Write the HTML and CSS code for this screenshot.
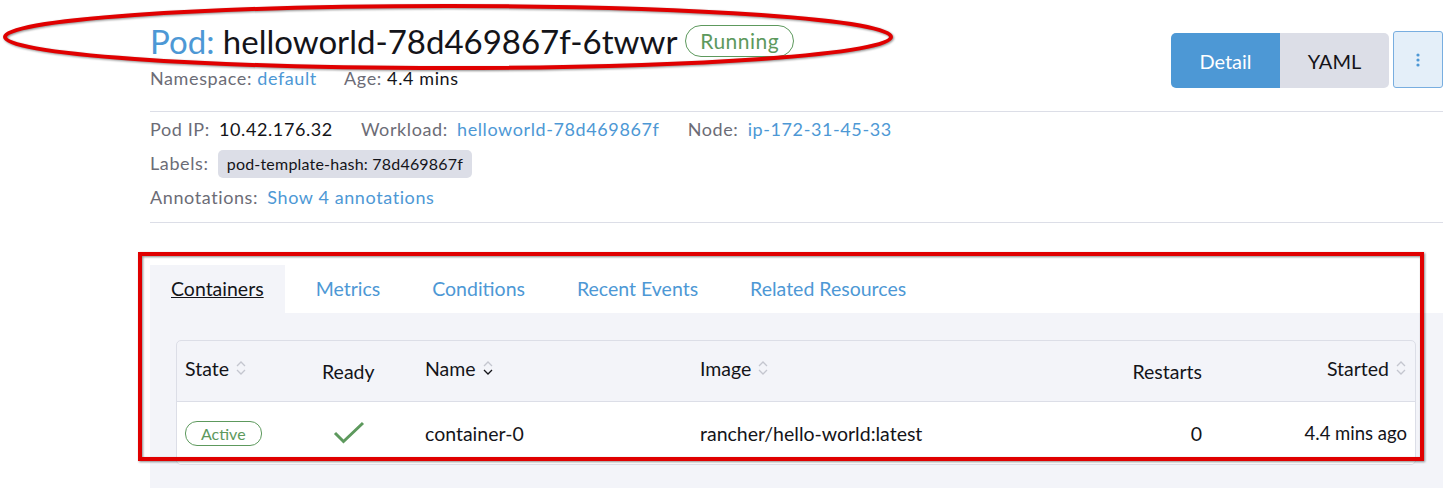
FILE: index.html
```html
<!DOCTYPE html>
<html>
<head>
  <title>Pod: helloworld-78d469867f-6twwr</title>
  <meta charset='utf-8'>
  <link rel="stylesheet" href="styles.css">
</head>
<body>

<div class="page">
  <header class="masthead">
    <div class="title-block">
      <h1><span class="kind">Pod:</span> helloworld-78d469867f-6twwr <span class="badge running">Running</span></h1>
      <div class="subline">
        <span class="lbl">Namespace:</span> <a href="#">default</a>
        <span class="lbl age">Age:</span> 4.4 mins
      </div>
    </div>
    <div class="actions">
      <div class="toggle">
        <button class="on">Detail</button><button>YAML</button>
      </div>
      <button class="kebab">
        <svg width="4" height="14" viewBox="0 0 4 14"><circle cx="2" cy="2" r="1.6"/><circle cx="2" cy="7" r="1.6"/><circle cx="2" cy="12" r="1.6"/></svg>
      </button>
    </div>
  </header>

  <section class="details">
    <div class="row">
      <span class="item"><span class="lbl">Pod IP:</span> <span class="val">10.42.176.32</span></span>
      <span class="item"><span class="lbl">Workload:</span> <a href="#">helloworld-78d469867f</a></span>
      <span class="item"><span class="lbl">Node:</span> <a href="#">ip-172-31-45-33</a></span>
    </div>
    <div class="row">
      <span class="lbl">Labels:</span> <span class="tag">pod-template-hash: 78d469867f</span>
    </div>
    <div class="row">
      <span class="lbl">Annotations:</span> <a href="#">Show 4 annotations</a>
    </div>
  </section>

  <section class="tabbed">
    <ul class="tabs">
      <li class="active"><a href="#">Containers</a></li>
      <li><a href="#">Metrics</a></li>
      <li><a href="#">Conditions</a></li>
      <li><a href="#">Recent Events</a></li>
      <li><a href="#">Related Resources</a></li>
    </ul>
    <div class="tab-body">
      <table class="sortable">
        <colgroup>
          <col style="width:137px"><col style="width:103px"><col style="width:275px"><col style="width:358px"><col style="width:160px"><col>
        </colgroup>
        <thead>
          <tr>
            <th><span class="th">State <svg class="sort" width="12" height="20" viewBox="0 0 12 20"><path d="M2 8 L6 4 L10 8"/><path d="M2 12 L6 16 L10 12"/></svg></span></th>
            <th>Ready</th>
            <th><span class="th">Name <svg class="sort" width="12" height="20" viewBox="0 0 12 20"><path d="M2 8 L6 4 L10 8"/><path class="cur" d="M2 12 L6 16 L10 12"/></svg></span></th>
            <th><span class="th">Image <svg class="sort" width="12" height="20" viewBox="0 0 12 20"><path d="M2 8 L6 4 L10 8"/><path d="M2 12 L6 16 L10 12"/></svg></span></th>
            <th class="right">Restarts</th>
            <th class="right"><span class="th">Started <svg class="sort" width="12" height="20" viewBox="0 0 12 20"><path d="M2 8 L6 4 L10 8"/><path d="M2 12 L6 16 L10 12"/></svg></span></th>
          </tr>
        </thead>
        <tbody>
          <tr>
            <td><span class="badge small running">Active</span></td>
            <td class="ready"><svg width="32" height="24" viewBox="0 0 32 24"><path d="M2 12 L10.5 20.5 L30 2"/></svg></td>
            <td>container-0</td>
            <td>rancher/hello-world:latest</td>
            <td class="right">0</td>
            <td class="right started">4.4 mins ago</td>
          </tr>
        </tbody>
      </table>
    </div>
  </section>
</div>

<!-- red markup drawn over the screenshot -->
<svg class="marks" width="1447" height="488" viewBox="0 0 1447 488">
  <ellipse cx="448" cy="37" rx="443" ry="31"/>
  <rect x="140" y="254" width="1282" height="205"/>
</svg>

</body>
</html>
```

FILE: styles.css
```css
body {
  margin:0;
  padding:0;
  font-family:'Lato', 'Noto Sans', sans-serif;
  color:#141419;
  background:#fff;
}

a {
  color:#4d98d5;
  text-decoration:none;
}

.page {
  padding:21px 4px 0 150px;
}

.lbl {
  color:#6c6c76;
}

/* header */
.masthead {
  display:flex;
  justify-content:space-between;
  align-items:flex-start;
}

h1 {
  margin:0;
  font-size:33px;
  line-height:40px;
  font-weight:normal;
  display:flex;
  align-items:center;
  white-space:pre;
}

.kind {
  color:#4d98d5;
}

.badge {
  display:inline-block;
  border:1px solid #5d995d;
  color:#5d995d;
  border-radius:16px;
  font-size:21px;
  letter-spacing:0.5px;
  line-height:30px;
  padding:0 14px;
}

.badge.small {
  font-size:16px;
  letter-spacing:0;
  line-height:23px;
  padding:0 15px;
  border-radius:12px;
}

.subline {
  margin-top:5px;
  font-size:18px;
  letter-spacing:0.6px;
  line-height:24px;
}

.subline .age {
  margin-left:22px;
}

.actions {
  display:flex;
  align-items:flex-end;
  gap:4px;
  margin-top:10px;
}

.toggle {
  display:flex;
  border-radius:5px;
  overflow:hidden;
}

button {
  font-family:inherit;
  border:0;
  cursor:pointer;
}

.toggle button {
  width:109px;
  height:55px;
  font-size:20px;
  background:#dcdee7;
  color:#141419;
}

.toggle button.on {
  background:#4d98d5;
  color:#fff;
}

.kebab {
  width:50px;
  height:57px;
  background:#e4eff9;
  border:1px solid #78aee0;
  border-radius:3px;
  display:flex;
  align-items:center;
  justify-content:center;
}

.kebab svg {
  fill:#4d98d5;
}

/* detail rows */
.details {
  margin-top:21px;
  border-top:1px solid #dcdee7;
  border-bottom:1px solid #dcdee7;
  padding:3px 0 11px;
  font-size:18px;
  letter-spacing:0.6px;
}

.details .row {
  height:28px;
  line-height:28px;
  margin-bottom:6px;
  white-space:nowrap;
}

.details .row:last-child {
  margin-bottom:0;
}

.details .item {
  margin-right:23px;
}

.details .lbl {
  margin-right:4px;
}

.tag {
  display:inline-block;
  background:#dcdee7;
  border-radius:5px;
  padding:0 9px;
  line-height:28px;
  font-size:16px;
  letter-spacing:0.2px;
}

/* tabs */
.tabbed {
  margin-top:42px;
}

.tabs {
  list-style:none;
  margin:0;
  padding:0;
  display:flex;
  gap:10px;
}

.tabs li {
  padding:0 21px;
  line-height:48px;
  font-size:19.5px;
}

.tabs li.active {
  background:#f3f4f9;
}

.tabs li.active a {
  color:#141419;
  text-decoration:underline;
}

.tab-body {
  background:#f3f4f9;
  padding:27px 27px 23px 26px;
}

table.sortable {
  width:100%;
  table-layout:fixed;
  border-collapse:separate;
  border-spacing:0;
  border:1px solid #dcdee7;
  border-radius:5px;
  font-size:19.5px;
  overflow:hidden;
}

.sortable th {
  font-weight:normal;
  text-align:left;
  height:60px;
  padding:0 8px;
  vertical-align:middle;
  border-bottom:1px solid #dcdee7;
}

.sortable .right {
  text-align:right;
}

.th {
  display:inline-flex;
  align-items:center;
  gap:6px;
  margin-bottom:6px;
}

.sort path {
  fill:none;
  stroke:#c4c6cf;
  stroke-width:1.3;
}

.sort path.cur {
  stroke:#141419;
}

.sortable td {
  background:#fff;
  height:62px;
  padding:0 8px;
}

.sortable td.started {
  font-size:18.5px;
}

.ready svg {
  display:block;
  margin-left:11px;
}

.ready path {
  fill:none;
  stroke:#5d995d;
  stroke-width:3;
}

.marks {
  position:absolute;
  top:0;
  left:0;
  pointer-events:none;
  filter:drop-shadow(1px 1px 1px rgba(0,0,0,0.45));
}

.marks ellipse, .marks rect {
  fill:none;
  stroke:#e00000;
  stroke-width:4;
}
```
